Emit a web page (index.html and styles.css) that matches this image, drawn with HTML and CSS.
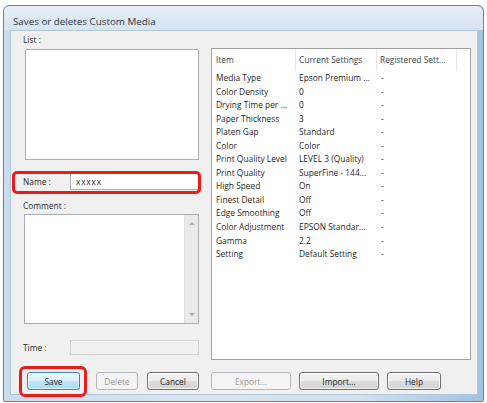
FILE: index.html
```html
<!DOCTYPE html>
<html lang="en">
<head>
<meta charset="utf-8">
<title>Saves or deletes Custom Media</title>
<link rel="stylesheet" href="styles.css">
</head>
<body>
<div class="window">
  <div class="titlebar">Saves or deletes Custom Media</div>
  <div class="client">
    <div class="main">
      <div class="left">
        <div class="label list-label">List :</div>
        <div class="listbox"></div>
        <div class="field name-row">
          <span class="field-label">Name :</span>
          <div class="textbox">xxxxx</div>
        </div>
        <div class="label comment-label">Comment :</div>
        <div class="memo">
          <div class="memo-body"></div>
          <div class="vscroll">
            <span class="arrow up"></span>
            <span class="arrow down"></span>
          </div>
        </div>
        <div class="field time-row">
          <span class="field-label">Time :</span>
          <div class="textbox disabled"></div>
        </div>
      </div>
      <div class="grid">
        <div class="grid-head">
          <span class="c1">Item</span>
          <span class="c2">Current Settings</span>
          <span class="c3">Registered Sett...</span>
          <span class="c4"></span>
        </div>
        <div class="grid-rows">
          <div class="row"><span class="c1">Media Type</span><span class="c2">Epson Premium ...</span><span class="c3">-</span></div>
          <div class="row"><span class="c1">Color Density</span><span class="c2">0</span><span class="c3">-</span></div>
          <div class="row"><span class="c1">Drying Time per ...</span><span class="c2">0</span><span class="c3">-</span></div>
          <div class="row"><span class="c1">Paper Thickness</span><span class="c2">3</span><span class="c3">-</span></div>
          <div class="row"><span class="c1">Platen Gap</span><span class="c2">Standard</span><span class="c3">-</span></div>
          <div class="row"><span class="c1">Color</span><span class="c2">Color</span><span class="c3">-</span></div>
          <div class="row"><span class="c1">Print Quality Level</span><span class="c2">LEVEL 3 (Quality)</span><span class="c3">-</span></div>
          <div class="row"><span class="c1">Print Quality</span><span class="c2">SuperFine - 144...</span><span class="c3">-</span></div>
          <div class="row"><span class="c1">High Speed</span><span class="c2">On</span><span class="c3">-</span></div>
          <div class="row"><span class="c1">Finest Detail</span><span class="c2">Off</span><span class="c3">-</span></div>
          <div class="row"><span class="c1">Edge Smoothing</span><span class="c2">Off</span><span class="c3">-</span></div>
          <div class="row"><span class="c1">Color Adjustment</span><span class="c2">EPSON Standar...</span><span class="c3">-</span></div>
          <div class="row"><span class="c1">Gamma</span><span class="c2">2.2</span><span class="c3">-</span></div>
          <div class="row"><span class="c1">Setting</span><span class="c2">Default Setting</span><span class="c3">-</span></div>
        </div>
      </div>
    </div>
    <div class="buttons">
      <div class="btn-group left-btns">
        <span class="marked"><button class="btn focus save">Save</button></span>
        <button class="btn disabled delete">Delete</button>
        <button class="btn cancel">Cancel</button>
      </div>
      <div class="btn-group right-btns">
        <button class="btn disabled wide">Export...</button>
        <button class="btn wide">Import...</button>
        <button class="btn help">Help</button>
      </div>
    </div>
  </div>
</div>
</body>
</html>
```

FILE: styles.css
```css
* { box-sizing: border-box; }

html, body {
  margin: 0;
  padding: 0;
  background: #ffffff;
}

body {
  font-family: "Open Sans", "Liberation Sans", Arial, sans-serif;
  font-size: 8.4px;
  color: #1f1f1f;
  width: 487px;
  height: 403px;
  overflow: hidden;
}

/* Window frame */
.window {
  margin: 5px 0 0 3px;
  width: 481px;
  height: 397px;
  border: 1px solid #6a8296;
  border-radius: 6px 6px 2px 2px;
  background: linear-gradient(to right, #c9dcee 0%, #d8e6f3 40%, #cfe0f0 75%, #9fc3e2 100%);
  padding: 0 5px 6px 6px;
  display: flex;
  flex-direction: column;
}

.titlebar {
  height: 24px;
  flex: none;
  display: flex;
  align-items: center;
  padding-top: 6px;
  font-size: 9.8px;
  color: #2a3440;
  background: linear-gradient(to bottom, #e6eef7, #d6e4f1);
  margin: 0 -5px 0 -6px;
  padding-left: 9px;
  border-radius: 6px 6px 0 0;
}

.client {
  flex: 1;
  background: #f0f0f0;
  border: 1px solid #b3c7da;
  display: flex;
  flex-direction: column;
  padding: 0 6px 0 12px;
}

.main {
  height: 328px;
  flex: none;
  display: flex;
  gap: 12px;
}

/* Left column */
.left {
  width: 176px;
  flex: none;
  display: flex;
  flex-direction: column;
}

.label {
  height: 14px;
  line-height: 14px;
}

.list-label { margin-top: 2px; }

.listbox {
  margin: 2px 0 0 2px;
  height: 111px;
  background: #fff;
  border: 1px solid #abadb3;
}

.field {
  display: flex;
  align-items: center;
}

.field-label {
  width: 47px;
  flex: none;
}

.textbox {
  flex: 1;
  background: #fff;
  border: 1px solid #abadb3;
  border-top-color: #8f9aa6;
  padding-left: 5px;
  font-size: 8.4px;
  letter-spacing: 0.8px;
}

.textbox.disabled {
  background: #f0f0f0;
  border-color: #d3d3d3;
}

.name-row {
  margin-top: 13px;
  height: 17px;
  position: relative;
}

.name-row .textbox {
  height: 17px;
  line-height: 15px;
}

/* red marker around the name field */
.name-row::before {
  content: "";
  position: absolute;
  left: -11px;
  right: -2px;
  top: -2px;
  bottom: -4px;
  border: 3px solid #ea1b1b;
  border-radius: 5px;
  pointer-events: none;
}

.comment-label { margin-top: 9px; }

.memo {
  margin: 1px 0 0 1px;
  height: 110px;
  display: flex;
  border: 1px solid #abadb3;
  background: #fff;
}

.memo-body { flex: 1; }

.vscroll {
  width: 14px;
  flex: none;
  background: #eaeaea;
  border-left: 1px solid #e0e0e0;
  position: relative;
}

.arrow {
  position: absolute;
  left: 4px;
  width: 0;
  height: 0;
  border-left: 3px solid transparent;
  border-right: 3px solid transparent;
}

.arrow.up {
  top: 7px;
  border-bottom: 3px solid #a8a8a8;
}

.arrow.down {
  bottom: 7px;
  border-top: 3px solid #a8a8a8;
}

.time-row {
  margin-top: 16px;
  height: 15px;
}

.time-row .textbox { height: 15px; }

/* Settings grid */
.grid {
  flex: 1;
  margin-top: 17px;
  height: 312px;
  background: #fff;
  border: 1px solid #a0a0a0;
  display: flex;
  flex-direction: column;
}

.grid-head {
  height: 22px;
  flex: none;
  display: flex;
  color: #34414f;
}

.grid-head span {
  height: 22px;
  line-height: 22px;
  border-right: 1px solid #e3e5e8;
}

.grid-head .c4 { flex: 1; border-right: 0; }

.c1, .c2, .c3 {
  white-space: nowrap;
  overflow: hidden;
}

.c1 { width: 84px; padding-left: 4px; }
.c2 { width: 81px; padding-left: 3px; }
.c3 { width: 80px; padding-left: 3px; }

.grid-rows {
  display: flex;
  flex-direction: column;
}

.row {
  display: flex;
  height: 13.55px;
  line-height: 13.55px;
}

.row .c3 { padding-left: 4px; }

/* Button row */
.buttons {
  margin-top: 13px;
  display: flex;
  gap: 12px;
}

.btn-group {
  display: flex;
}

.left-btns {
  width: 176px;
  padding-left: 4px;
}

.right-btns { gap: 8px; }

.btn {
  height: 18px;
  padding: 0;
  font-family: inherit;
  font-size: 8.4px;
  color: #1f1f1f;
  border: 1px solid #707070;
  border-radius: 3px;
  background: linear-gradient(to bottom, #f4f4f4 0%, #ececec 48%, #dcdcdc 52%, #d2d2d2 100%);
  box-shadow: inset 0 0 0 1px rgba(255, 255, 255, 0.7);
}

.btn.focus {
  border-color: #3c7fb1;
  background: linear-gradient(to bottom, #eaf6fd 0%, #d9f0fc 48%, #bee6fd 52%, #a7d9f5 100%);
}

.btn.disabled {
  color: #9a9a9a;
  border-color: #b5b8bb;
  background: #f4f4f4;
  box-shadow: none;
}

.marked {
  position: relative;
  display: flex;
}

/* red marker around the Save button */
.marked::after {
  content: "";
  position: absolute;
  left: -8px;
  right: -7px;
  top: -6px;
  bottom: -7px;
  border: 3px solid #ea1b1b;
  border-radius: 6px;
  pointer-events: none;
}

.save { width: 53px; }
.delete { width: 42px; margin-left: 16px; }
.cancel { width: 52px; margin-left: 9px; }
.wide { width: 80px; }
.help { width: 54px; }
```
